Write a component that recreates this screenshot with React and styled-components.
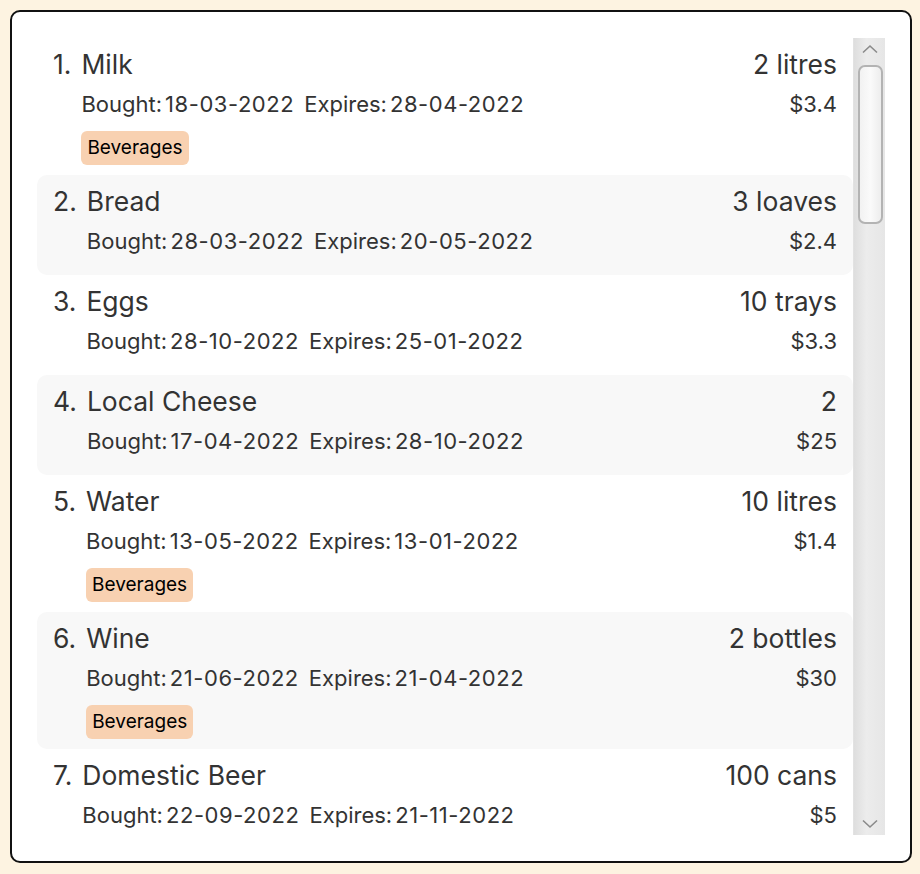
import React from 'react';
import styled, { createGlobalStyle } from 'styled-components';

const items = [
  { name: 'Milk', bought: '18-03-2022', expires: '28-04-2022', qty: '2 litres', price: '$3.4', tags: ['Beverages'] },
  { name: 'Bread', bought: '28-03-2022', expires: '20-05-2022', qty: '3 loaves', price: '$2.4', tags: [] },
  { name: 'Eggs', bought: '28-10-2022', expires: '25-01-2022', qty: '10 trays', price: '$3.3', tags: [] },
  { name: 'Local Cheese', bought: '17-04-2022', expires: '28-10-2022', qty: '2', price: '$25', tags: [] },
  { name: 'Water', bought: '13-05-2022', expires: '13-01-2022', qty: '10 litres', price: '$1.4', tags: ['Beverages'] },
  { name: 'Wine', bought: '21-06-2022', expires: '21-04-2022', qty: '2 bottles', price: '$30', tags: ['Beverages'] },
  { name: 'Domestic Beer', bought: '22-09-2022', expires: '21-11-2022', qty: '100 cans', price: '$5', tags: [] },
];

const App = () => {
  return (
    <>
      <GlobalStyle />
      <Card>
        <ListView>
          <ListBody>
            {items.map((item, i) => (
              <Row key={item.name} $odd={i % 2 === 1}>
                <Index>{i + 1}.</Index>
                <Main>
                  <Title>{item.name}</Title>
                  <Details>
                    <Label>Bought:</Label>
                    <DateText>{item.bought}</DateText>
                    <Label $gap>Expires:</Label>
                    <DateText>{item.expires}</DateText>
                  </Details>
                  {item.tags.length > 0 && (
                    <Tags>
                      {item.tags.map((t) => (
                        <Tag key={t}>{t}</Tag>
                      ))}
                    </Tags>
                  )}
                </Main>
                <Side>
                  <Title>{item.qty}</Title>
                  <Details>{item.price}</Details>
                </Side>
              </Row>
            ))}
          </ListBody>
          <ScrollBar>
            <Arrow>
              <svg width="18" height="10" viewBox="0 0 18 10">
                <path d="M2 8.5 L9 2 L16 8.5" fill="none" stroke="#8a8a8a" strokeWidth="1.6" />
              </svg>
            </Arrow>
            <Track>
              <Thumb />
            </Track>
            <Arrow>
              <svg width="18" height="10" viewBox="0 0 18 10">
                <path d="M2 1.5 L9 8 L16 1.5" fill="none" stroke="#8a8a8a" strokeWidth="1.6" />
              </svg>
            </Arrow>
          </ScrollBar>
        </ListView>
      </Card>
    </>
  );
};

export default App;

const GlobalStyle = createGlobalStyle`
  body {
    margin: 0;
    background: #fdf3e1;
    font-family: Inter, "Open Sans", sans-serif;
  }
`;

const Card = styled.div`
  box-sizing: border-box;
  width: 902px;
  height: 853px;
  margin: 10px;
  border: 2px solid #111;
  border-radius: 10px;
  background: #fff;
  padding: 26px 25px;
  display: flex;
`;

const ListView = styled.div`
  flex: 1;
  display: flex;
  min-height: 0;
`;

const ListBody = styled.div`
  flex: 1;
  overflow: hidden;
`;

const Row = styled.div`
  display: flex;
  align-items: flex-start;
  padding: 10px 16px;
  border-radius: 10px;
  background: ${(p) => (p.$odd ? '#f8f8f8' : 'transparent')};
  color: #333;
`;

const Index = styled.div`
  font-size: 26.5px;
  line-height: 32px;
  margin-right: 10px;
`;

const Main = styled.div`
  flex: 1;
  display: flex;
  flex-direction: column;
`;

const Side = styled.div`
  display: flex;
  flex-direction: column;
  align-items: flex-end;
`;

const Title = styled.div`
  font-size: 26.5px;
  line-height: 32px;
`;

const Details = styled.div`
  font-size: 22px;
  line-height: 30px;
  margin: 9px 0;
  display: flex;
`;

const Label = styled.span`
  margin-left: ${(p) => (p.$gap ? '10px' : '0')};
  margin-right: 3px;
`;

const DateText = styled.span`
  letter-spacing: 0.55px;
`;

const Tags = styled.div`
  display: flex;
  gap: 6px;
  margin-top: 3px;
`;

const Tag = styled.span`
  background: #f8d1b1;
  color: #000;
  font-size: 19px;
  line-height: 34px;
  padding: 0 6px;
  border-radius: 6px;
`;

const ScrollBar = styled.div`
  width: 32px;
  display: flex;
  flex-direction: column;
  background: linear-gradient(to right, #dedede, #ececec 40%, #e6e6e6);
  border-left: 1px solid #e2e2e2;
  box-sizing: border-box;
`;

const Arrow = styled.div`
  height: 22px;
  display: flex;
  align-items: center;
  justify-content: center;
`;

const Track = styled.div`
  flex: 1;
  padding: 5px 2px 0 4px;
`;

const Thumb = styled.div`
  height: 155px;
  border: 2px solid #b3b3b3;
  border-radius: 7px;
  background: linear-gradient(to right, #f2f2f2, #fafafa 50%, #ededed);
`;
